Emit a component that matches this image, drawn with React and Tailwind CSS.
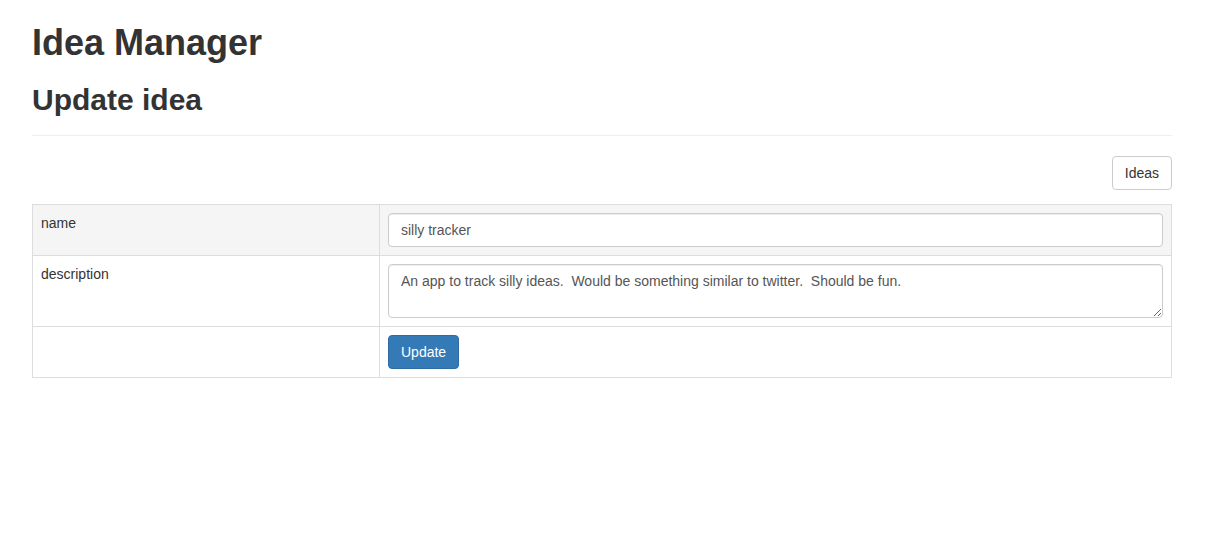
export default function App() {
  return (
    <div className="min-h-screen bg-white text-[#333] text-[14px] leading-[20px]" style={{ fontFamily: '"Liberation Sans", Arial, sans-serif' }}>
      <div className="ml-[32px] w-[1140px]">
        <h1 className="mt-[23px] mb-[10px] text-[36px] leading-[39.6px] font-bold">Idea Manager</h1>
        <div className="mt-[20px] mb-[20px] pb-[9px] border-b border-[#eee]">
          <h2 className="mb-[10px] text-[30px] leading-[33px] font-bold">Update idea</h2>
        </div>
        <div className="flex justify-end mb-[14px]">
          <button className="h-[34px] px-[12px] border border-[#ccc] rounded-[4px] bg-white text-[14px] text-[#333]">Ideas</button>
        </div>
        <table className="w-full border-collapse border border-[#ddd]">
          <tbody>
            <tr className="bg-[#f5f5f5]">
              <td className="w-[347px] p-[8px] align-top border border-[#ddd]">name</td>
              <td className="p-[8px] align-top border border-[#ddd]">
                <input
                  defaultValue="silly tracker"
                  className="block w-full h-[34px] px-[12px] py-[6px] bg-white border border-[#ccc] rounded-[4px] text-[#555] text-[14px] shadow-[inset_0_1px_1px_rgba(0,0,0,0.075)]"
                />
              </td>
            </tr>
            <tr>
              <td className="p-[8px] align-top border border-[#ddd]">description</td>
              <td className="p-[8px] align-top border border-[#ddd]">
                <textarea
                  defaultValue="An app to track silly ideas.  Would be something similar to twitter.  Should be fun."
                  className="block w-full h-[54px] px-[12px] py-[6px] bg-white border border-[#ccc] rounded-[4px] text-[#555] text-[14px] leading-[20px] shadow-[inset_0_1px_1px_rgba(0,0,0,0.075)] whitespace-pre-wrap"
                />
              </td>
            </tr>
            <tr>
              <td className="p-[8px] align-top border border-[#ddd]"></td>
              <td className="p-[8px] align-top border border-[#ddd]">
                <button className="h-[34px] px-[12px] border border-[#2e6da4] rounded-[4px] bg-[#337ab7] text-white text-[14px]">Update</button>
              </td>
            </tr>
          </tbody>
        </table>
      </div>
    </div>
  );
}
